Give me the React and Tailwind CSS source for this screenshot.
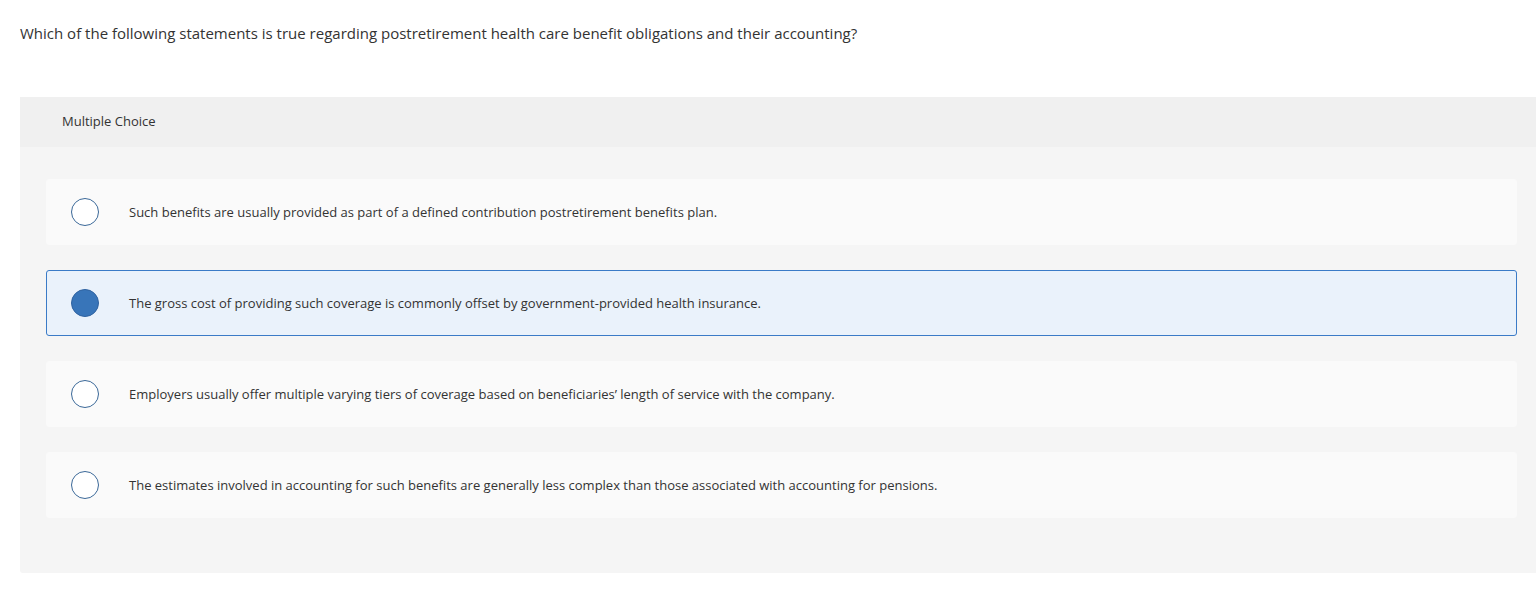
import React, { useState } from "react";

const options = [
  "Such benefits are usually provided as part of a defined contribution postretirement benefits plan.",
  "The gross cost of providing such coverage is commonly offset by government-provided health insurance.",
  "Employers usually offer multiple varying tiers of coverage based on beneficiaries’ length of service with the company.",
  "The estimates involved in accounting for such benefits are generally less complex than those associated with accounting for pensions.",
];

function App() {
  const [selected, setSelected] = useState(1);

  return (
    <div
      className="w-full min-h-[605px] bg-white text-[#333333]"
      style={{ fontFamily: "'Open Sans', Lato, sans-serif" }}
    >
      <p className="pl-[20px] pt-[23px] text-[15px] leading-[20px]">
        Which of the following statements is true regarding postretirement health care benefit obligations and their accounting?
      </p>
      <div className="ml-[20px] mt-[54px] bg-[#f5f5f5] rounded-l-[3px]">
        <div className="h-[50px] bg-[#f0f0f0] pl-[42px] flex items-center text-[13px]">
          Multiple Choice
        </div>
        <div className="pl-[26px] pr-[19px] pt-[32px] pb-[55px] flex flex-col gap-[25px]">
          {options.map((text, i) => {
            const active = selected === i;
            return (
              <div
                key={i}
                onClick={() => setSelected(i)}
                className={
                  active
                    ? "h-[66px] flex items-center rounded-[3px] border border-[#3b7bc7] bg-[#eaf2fb] cursor-pointer"
                    : "h-[66px] flex items-center rounded-[3px] border border-[#fafafa] bg-[#fafafa] cursor-pointer"
                }
              >
                <span
                  className={
                    active
                      ? "ml-[24px] w-[28px] h-[28px] rounded-full border border-[#2f62a0] bg-[#3875b9] shrink-0"
                      : "ml-[24px] w-[28px] h-[28px] rounded-full border border-[#3a6898] bg-white shrink-0"
                  }
                />
                <span className="ml-[30px] text-[13px] leading-[18px]">{text}</span>
              </div>
            );
          })}
        </div>
      </div>
    </div>
  );
}

export default App;
